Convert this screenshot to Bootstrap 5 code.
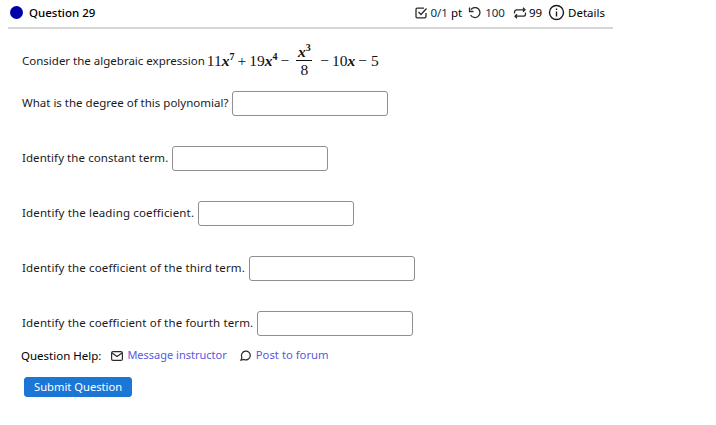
<!DOCTYPE html>
<html lang="en">
<head>
  <meta charset="UTF-8">
  <meta name="viewport" content="width=device-width, initial-scale=1">
  <title>Question 29</title>
  <link href="https://cdn.jsdelivr.net/npm/bootstrap@5.3.0/dist/css/bootstrap.min.css" rel="stylesheet">
  <style>
    body {
      font-family: "Noto Sans", "DejaVu Sans", sans-serif;
      font-size: 11.5px;
      color: #1a1a1a;
      background: #fff;
    }
    .q-wrap { width: 613px; padding-left: 8px; }
    .q-head {
      height: 29px;
      padding-bottom: 1px;
      padding-right: 8px;
      border-bottom: 2px solid #d6d6d6;
      color: #000;
    }
    .q-dot {
      width: 13px;
      height: 13px;
      border-radius: 50%;
      background: #0000a8;
      margin-left: 2px;
      margin-right: 6px;
      margin-bottom: 2px;
    }
    .q-title { font-size: 11.5px; font-weight: 500; }
    .q-num { color: #0b2f55; }
    .q-body { padding-left: 14px; }
    .q-expr { height: 61px; margin-top: 1px; }
    .q-math {
      font-family: "Liberation Serif", serif;
      font-size: 15.5px;
      color: #111;
      margin-left: 2px;
      gap: 3px;
    }
    .q-math i { font-weight: 700; }
    .q-math sup { font-size: 10px; top: -6px; font-weight: 700; }
    .q-frac { width: 16px; text-align: center; line-height: 17px; margin: 0 5px 0 4px; }
    .q-frac > span { display: block; }
    .q-frac > span:first-child { border-bottom: 1px solid #111; }
    .q-end { margin-left: 1px; }
    .q-row { height: 55px; align-items: flex-start; }
    .q-row label { margin-top: 3px; margin-right: 4px; }
    .q-id label { letter-spacing: .14px; }
    .q-id label.q-tight { letter-spacing: .07px; }
    .q-input {
      width: 156px;
      height: 25px;
      border: 1px solid #8f8f8f;
      border-radius: 3px;
      padding: 0 4px;
      font-size: 12px;
    }
    .q-input.q-wide { width: 166px; }
    .q-last { height: 36px; }
    .q-help { margin-left: -1px; color: #000; }
    .q-help a { color: #5858e0; text-decoration: none; font-size: 11px; }
    .q-help a.q-forum { font-size: 11.3px; }
    .q-help-label { margin-right: 10px; }
    .q-mail { margin-right: 4px; }
    .q-bubble { margin-left: 13px; margin-right: 5px; }
    .q-submit {
      --bs-btn-padding-x: 9px;
      --bs-btn-padding-y: 0;
      --bs-btn-font-size: 11.2px;
      --bs-btn-bg: #1b76d6;
      --bs-btn-border-color: #1b76d6;
      --bs-btn-border-radius: 3px;
      height: 20px;
      margin-top: 13px;
      margin-left: 2px;
    }
    .gap-a { margin-left: 6px; }
    .gap-b { margin-left: 8px; }
    .gap-c { margin-right: 3px; }
    .gap-d { margin-left: 2px; }
    .q-info { margin-left: 6px; margin-bottom: 2px; }
  </style>
</head>
<body>
  <div class="q-wrap">
    <!-- Question header -->
    <div class="q-head d-flex align-items-center justify-content-between">
      <div class="d-flex align-items-center">
        <span class="q-dot"></span>
        <span class="q-title">Question 29</span>
      </div>
      <div class="d-flex align-items-center">
        <svg class="gap-c" width="13" height="12" viewBox="0 0 13 12" fill="none" stroke="#2a2a2a" stroke-width="1.3"><path d="M11 6V9.500a1.300 1.300 0 0 1-1.300 1.300H2.300A1.300 1.300 0 0 1 1 9.500V2.500a1.300 1.300 0 0 1 1.300-1.300H9"/><path d="M3.500 5l2.500 2.500L11.500 1.500"/></svg>
        <span><span class="q-num">0/1</span> pt</span>
        <svg class="gap-a gap-c" width="14" height="12" viewBox="0 0 14 12" fill="none" stroke="#2a2a2a" stroke-width="1.3"><path d="M3 2.500A5 5 0 1 1 2.600 8"/><path d="M1.500 .5V4.500H5.500"/></svg>
        <span class="q-num">100</span>
        <svg class="gap-b" width="14" height="12" viewBox="0 0 14 12" fill="none" stroke="#2a2a2a" stroke-width="1.3"><path d="M1.500 6.500V5a2.200 2.200 0 0 1 2.200-2.200H12M10 .8l2 2-2 2"/><path d="M12.500 5.500V7a2.200 2.200 0 0 1-2.200 2.200H2M4 7.200l-2 2 2 2"/></svg>
        <span class="gap-d">99</span>
        <svg class="gap-c q-info" width="17" height="17" viewBox="0 0 17 17" fill="none" stroke="#1a1a1a" stroke-width="1.4"><circle cx="8.500" cy="8.500" r="7"/><path d="M8.500 7.500V12.500"/><path d="M8.500 4.500V6"/></svg>
        <span>Details</span>
      </div>
    </div>

    <!-- Question body -->
    <div class="q-body">
      <div class="q-expr d-flex align-items-center">
        <span>Consider the algebraic expression</span>
        <span class="q-math d-flex align-items-center">
          <span>11<i>x</i><sup>7</sup></span>
          <span>+</span>
          <span>19<i>x</i><sup>4</sup></span>
          <span>&minus;</span>
          <span class="q-frac"><span><i>x</i><sup>3</sup></span><span>8</span></span>
          <span>&minus;</span>
          <span>10<i>x</i></span>
          <span>&minus;</span>
          <span class="q-end">5</span>
        </span>
      </div>
      <div class="q-row d-flex"><label>What is the degree of this polynomial?</label><input class="q-input" type="text"></div>
      <div class="q-row q-id d-flex"><label class="q-tight">Identify the constant term.</label><input class="q-input" type="text"></div>
      <div class="q-row q-id d-flex"><label>Identify the leading coefficient.</label><input class="q-input" type="text"></div>
      <div class="q-row q-id d-flex"><label>Identify the coefficient of the third term.</label><input class="q-input q-wide" type="text"></div>
      <div class="q-row q-id q-last d-flex"><label>Identify the coefficient of the fourth term.</label><input class="q-input" type="text"></div>
      <div class="q-help d-flex align-items-center">
        <span class="q-help-label">Question Help:</span>
        <svg class="q-mail" width="12" height="10" viewBox="0 0 12 10" fill="none" stroke="#2a2a2a" stroke-width="1.2"><rect x=".6" y=".6" width="10.800" height="8.800" rx="1.500"/><path d="M1 2l5 3.500L11 2"/></svg>
        <a href="#">Message instructor</a>
        <svg class="q-bubble" width="11" height="11" viewBox="0 0 11 11" fill="none" stroke="#2a2a2a" stroke-width="1.2"><path d="M1 10.200l.9-2.800A4.400 4.400 0 1 1 4 9.500z"/></svg>
        <a class="q-forum" href="#">Post to forum</a>
      </div>
      <button class="btn btn-primary q-submit" type="button">Submit Question</button>
    </div>
  </div>

  <script src="https://cdn.jsdelivr.net/npm/bootstrap@5.3.0/dist/js/bootstrap.bundle.min.js"></script>
</body>
</html>
